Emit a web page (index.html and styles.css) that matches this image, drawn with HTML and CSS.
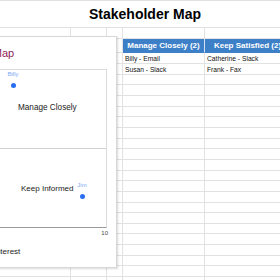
FILE: index.html
```html
<!DOCTYPE html>
<html>
<head>
  <meta charset="utf-8">
  <meta name="viewport" content="width=device-width">
  <title>Stakeholder Map</title>
  <link rel="stylesheet" href="styles.css">
</head>
<body>
<div class="page">
  <div class="sheet">
    <div class="cell title">Stakeholder Map</div><div class="cell"></div>
    <div class="cell"></div><div class="cell"></div><div class="cell"></div><div class="cell"></div><div class="cell"></div><div class="cell"></div>
    <div class="cell"></div><div class="cell"></div><div class="cell"></div><div class="cell head">Manage Closely (2)</div><div class="cell head">Keep Satisfied (2)</div><div class="cell"></div>
    <div class="cell"></div><div class="cell"></div><div class="cell"></div><div class="cell">Billy - Email</div><div class="cell">Catherine - Slack</div><div class="cell"></div>
    <div class="cell"></div><div class="cell"></div><div class="cell"></div><div class="cell">Susan - Slack</div><div class="cell">Frank - Fax</div><div class="cell"></div>
    <div class="cell"></div><div class="cell"></div><div class="cell"></div><div class="cell"></div><div class="cell"></div><div class="cell"></div>
    <div class="cell"></div><div class="cell"></div><div class="cell"></div><div class="cell"></div><div class="cell"></div><div class="cell"></div>
    <div class="cell"></div><div class="cell"></div><div class="cell"></div><div class="cell"></div><div class="cell"></div><div class="cell"></div>
    <div class="cell"></div><div class="cell"></div><div class="cell"></div><div class="cell"></div><div class="cell"></div><div class="cell"></div>
    <div class="cell"></div><div class="cell"></div><div class="cell"></div><div class="cell"></div><div class="cell"></div><div class="cell"></div>
    <div class="cell"></div><div class="cell"></div><div class="cell"></div><div class="cell"></div><div class="cell"></div><div class="cell"></div>
    <div class="cell"></div><div class="cell"></div><div class="cell"></div><div class="cell"></div><div class="cell"></div><div class="cell"></div>
    <div class="cell"></div><div class="cell"></div><div class="cell"></div><div class="cell"></div><div class="cell"></div><div class="cell"></div>
    <div class="cell"></div><div class="cell"></div><div class="cell"></div><div class="cell"></div><div class="cell"></div><div class="cell"></div>
    <div class="cell"></div><div class="cell"></div><div class="cell"></div><div class="cell"></div><div class="cell"></div><div class="cell"></div>
    <div class="cell"></div><div class="cell"></div><div class="cell"></div><div class="cell"></div><div class="cell"></div><div class="cell"></div>
    <div class="cell"></div><div class="cell"></div><div class="cell"></div><div class="cell"></div><div class="cell"></div><div class="cell"></div>
    <div class="cell"></div><div class="cell"></div><div class="cell"></div><div class="cell"></div><div class="cell"></div><div class="cell"></div>
    <div class="cell"></div><div class="cell"></div><div class="cell"></div><div class="cell"></div><div class="cell"></div><div class="cell"></div>
    <div class="cell"></div><div class="cell"></div><div class="cell"></div><div class="cell"></div><div class="cell"></div><div class="cell"></div>
    <div class="cell"></div><div class="cell"></div><div class="cell"></div><div class="cell"></div><div class="cell"></div><div class="cell"></div>
    <div class="cell"></div><div class="cell"></div><div class="cell"></div><div class="cell"></div><div class="cell"></div><div class="cell"></div>
    <div class="cell"></div><div class="cell"></div><div class="cell"></div><div class="cell"></div><div class="cell"></div><div class="cell"></div>
    <div class="cell"></div><div class="cell"></div><div class="cell"></div><div class="cell"></div><div class="cell"></div><div class="cell"></div>
    <div class="cell"></div><div class="cell"></div><div class="cell"></div><div class="cell"></div><div class="cell"></div><div class="cell"></div>
  </div>

  <div class="chart">
    <div class="chart-title">Stakeholder Map</div>
    <div class="plot">
      <div class="half top"></div>
      <div class="half"></div>
      <span class="quad quad-manage">Manage Closely</span>
      <span class="quad quad-inform">Keep Informed</span>
      <div class="point" style="left:106px;top:15px"><span>Billy</span></div>
      <div class="point" style="left:175px;top:126px"><span>Jim</span></div>
    </div>
    <div class="ticks">10</div>
    <div class="axis-title">Interest</div>
  </div>
</div>
</body>
</html>
```

FILE: styles.css
```css
body{
	margin:0;
	background:#fff;
	font-family:"Liberation Sans", Arial, sans-serif;
}
.page{
	position:relative;
	width:280px;
	height:280px;
	overflow:hidden;
}

/* spreadsheet grid */
.sheet{
	display:grid;
	grid-template-columns:71px 36px 16px 82px 86px 63px;
	grid-template-rows:27px 10.67px 14.67px repeat(22, 10.667px);
	width:354px;
	border-top:1px solid #e2e2e2;
}
.cell{
	box-sizing:border-box;
	border-right:1px solid #e2e2e2;
	border-bottom:1px solid #e2e2e2;
	padding:0 2px;
	font-size:6.7px;
	line-height:11px;
	color:#111;
	white-space:nowrap;
	overflow:hidden;
}
.title{
	grid-column:1 / 6;
	font-size:14px;
	font-weight:bold;
	line-height:26px;
	text-align:center;
	color:#000;
}
.head{
	background:#3d80c8;
	border-right-color:#d4e2f3;
	border-bottom-color:#3d80c8;
	color:#fff;
	font-size:8px;
	font-weight:bold;
	line-height:14px;
	text-align:center;
}

/* floating chart */
.chart{
	position:absolute;
	left:-120px;
	top:36px;
	width:237px;
	height:232px;
	box-sizing:border-box;
	background:#fff;
	border:1px solid #d8d8d8;
	box-shadow:1px 1px 2px rgba(0,0,0,0.15);
}
.chart-title{
	height:32px;
	box-sizing:border-box;
	padding:10px 0 0 50px;
	font-size:11px;
	line-height:13px;
	color:#8e2456;
}
.plot{
	position:relative;
	height:159px;
	box-sizing:border-box;
	margin:0 9px 0 26px;
	border-top:1px solid #dcdcdc;
	border-right:1px solid #dcdcdc;
	border-bottom:1px solid #9a9a9a;
}
.half{
	height:78px;
}
.half.top{
	height:79px;
	box-sizing:border-box;
	border-bottom:1px solid #d0d0d0;
}
.quad{
	position:absolute;
	font-size:8.2px;
	line-height:10px;
	color:#222;
	white-space:nowrap;
}
.quad-manage{
	left:111px;
	top:33px;
}
.quad-inform{
	left:114px;
	top:114px;
	font-size:8px;
}
.point{
	position:absolute;
	width:5px;
	height:5px;
	margin:-2.5px 0 0 -2.5px;
	border-radius:50%;
	background:#2a6ef0;
}
.point span{
	position:absolute;
	left:50%;
	bottom:calc(100% + 5.5px);
	transform:translateX(-50%);
	font-size:6px;
	line-height:6px;
	color:#7eaaf5;
	white-space:nowrap;
}
.ticks{
	margin:1px 8px 0 0;
	text-align:right;
	font-size:6px;
	line-height:8px;
	color:#444;
}
.axis-title{
	margin:10px 9px 0 26px;
	text-align:center;
	font-size:8px;
	line-height:10px;
	color:#222;
}
```
